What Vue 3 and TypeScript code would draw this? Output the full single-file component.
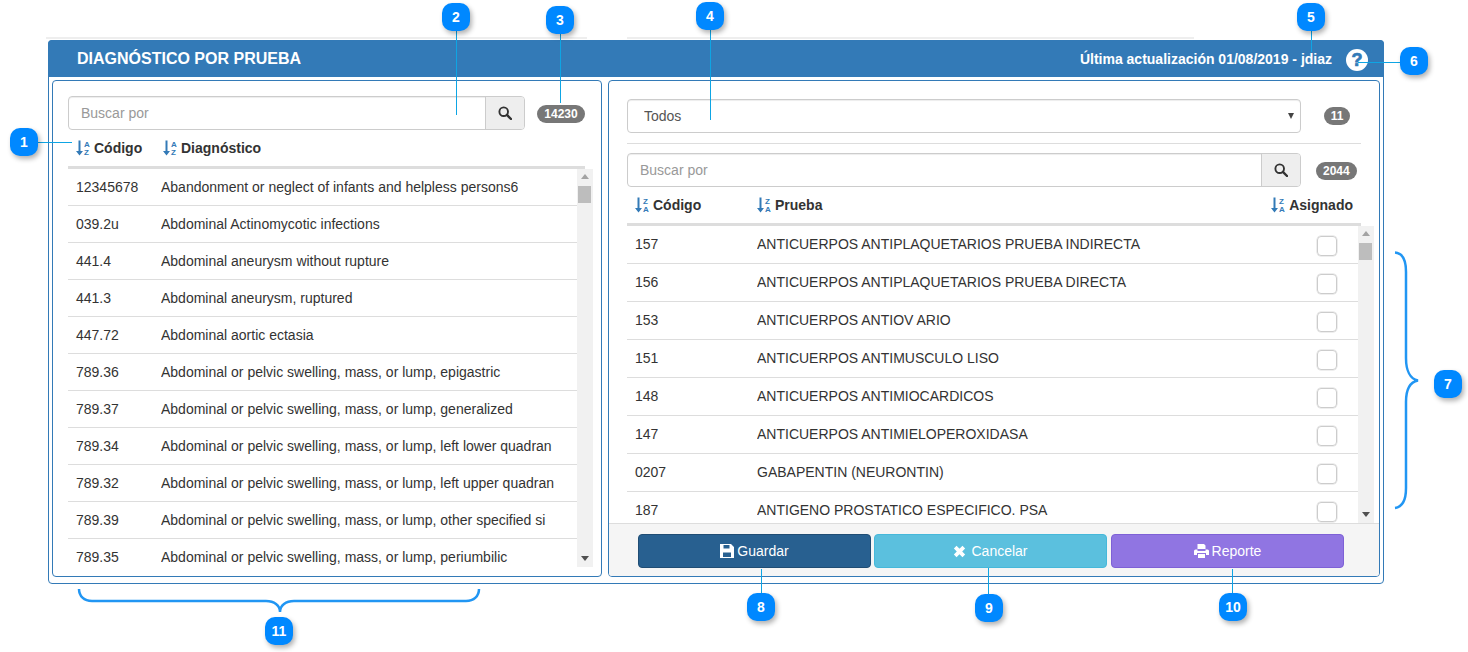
<script setup lang="ts">
interface Diag { code: string; name: string }
interface Test { code: string; name: string }
interface Marker { n: number; x: number; y: number }

const diagnosticos: Diag[] = [
  { code: '12345678', name: 'Abandonment or neglect of infants and helpless persons6' },
  { code: '039.2u', name: 'Abdominal Actinomycotic infections' },
  { code: '441.4', name: 'Abdominal aneurysm without rupture' },
  { code: '441.3', name: 'Abdominal aneurysm, ruptured' },
  { code: '447.72', name: 'Abdominal aortic ectasia' },
  { code: '789.36', name: 'Abdominal or pelvic swelling, mass, or lump, epigastric' },
  { code: '789.37', name: 'Abdominal or pelvic swelling, mass, or lump, generalized' },
  { code: '789.34', name: 'Abdominal or pelvic swelling, mass, or lump, left lower quadran' },
  { code: '789.32', name: 'Abdominal or pelvic swelling, mass, or lump, left upper quadran' },
  { code: '789.39', name: 'Abdominal or pelvic swelling, mass, or lump, other specified si' },
  { code: '789.35', name: 'Abdominal or pelvic swelling, mass, or lump, periumbilic' },
]

const pruebas: Test[] = [
  { code: '157', name: 'ANTICUERPOS ANTIPLAQUETARIOS PRUEBA INDIRECTA' },
  { code: '156', name: 'ANTICUERPOS ANTIPLAQUETARIOS PRUEBA DIRECTA' },
  { code: '153', name: 'ANTICUERPOS ANTIOV ARIO' },
  { code: '151', name: 'ANTICUERPOS ANTIMUSCULO LISO' },
  { code: '148', name: 'ANTICUERPOS ANTIMIOCARDICOS' },
  { code: '147', name: 'ANTICUERPOS ANTIMIELOPEROXIDASA' },
  { code: '0207', name: 'GABAPENTIN (NEURONTIN)' },
  { code: '187', name: 'ANTIGENO PROSTATICO ESPECIFICO. PSA' },
]

// numbered callouts drawn over the screen
const markers: Marker[] = [
  { n: 1, x: 10, y: 128 },
  { n: 2, x: 442, y: 3 },
  { n: 3, x: 546, y: 6 },
  { n: 4, x: 696, y: 2 },
  { n: 5, x: 1297, y: 3 },
  { n: 6, x: 1400, y: 47 },
  { n: 7, x: 1434, y: 370 },
  { n: 8, x: 747, y: 593 },
  { n: 9, x: 975, y: 594 },
  { n: 10, x: 1219, y: 593 },
  { n: 11, x: 265, y: 617 },
]
</script>

<template>
  <div class="page">
    <div class="strips"><span class="strip strip--a"></span><span class="strip strip--b"></span></div>

    <section class="panel">
      <header class="panel__head">
        <h1 class="panel__title">DIAGNÓSTICO POR PRUEBA</h1>
        <span class="panel__updated">Última actualización 01/08/2019 - jdiaz</span>
        <span class="help">?</span>
      </header>

      <div class="panel__body">
        <!-- Diagnosticos -->
        <div class="box box--left">
          <div class="search-row search-row--left">
            <div class="search">
              <input class="search__input" type="text" placeholder="Buscar por" />
              <span class="search__btn">
                <svg width="14" height="14" viewBox="0 0 14 14"><circle cx="5.7" cy="5.7" r="4.3" fill="none" stroke="#333" stroke-width="1.9" /><path d="M8.9 8.9 13 13" stroke="#333" stroke-width="2.4" stroke-linecap="round" /></svg>
              </span>
            </div>
            <span class="count count--total">14230</span>
          </div>

          <div class="cols cols--left">
            <span class="col col--code">
              <svg class="sort" width="14" height="16" viewBox="0 0 14 16"><path d="M2.500 0.500h2V11H7l-3.500 4.500L0 11h2.500z" fill="#337ab7" /><text x="8" y="7" class="sort__t">A</text><text x="8" y="15" class="sort__t">Z</text></svg>
              Código
            </span>
            <span class="col">
              <svg class="sort" width="14" height="16" viewBox="0 0 14 16"><path d="M2.500 0.500h2V11H7l-3.500 4.500L0 11h2.500z" fill="#337ab7" /><text x="8" y="7" class="sort__t">A</text><text x="8" y="15" class="sort__t">Z</text></svg>
              Diagnóstico
            </span>
          </div>

          <div class="list list--left">
            <div class="rows">
              <div v-for="d in diagnosticos" :key="d.code" class="row row--left">
                <span class="row__code">{{ d.code }}</span>
                <span class="row__name">{{ d.name }}</span>
              </div>
            </div>
            <div class="scroll">
              <i class="scroll__up"></i>
              <i class="scroll__thumb"></i>
              <i class="scroll__down"></i>
            </div>
          </div>
        </div>

        <!-- Pruebas -->
        <div class="box box--right">
          <div class="box__inner">
            <div class="filter-row">
              <div class="select">
                <select class="select__el">
                  <option>Todos</option>
                </select>
                <i class="select__arrow"></i>
              </div>
              <span class="count count--eleven">11</span>
            </div>
            <hr class="sep" />
            <div class="search-row search-row--right">
              <div class="search">
                <input class="search__input" type="text" placeholder="Buscar por" />
                <span class="search__btn">
                  <svg width="14" height="14" viewBox="0 0 14 14"><circle cx="5.7" cy="5.7" r="4.3" fill="none" stroke="#333" stroke-width="1.9" /><path d="M8.9 8.9 13 13" stroke="#333" stroke-width="2.4" stroke-linecap="round" /></svg>
                </span>
              </div>
              <span class="count">2044</span>
            </div>

            <div class="cols cols--right">
              <span class="col col--code-r">
                <svg class="sort" width="14" height="16" viewBox="0 0 14 16"><path d="M2.500 0.500h2V11H7l-3.500 4.500L0 11h2.500z" fill="#337ab7" /><text x="8" y="7" class="sort__t">Z</text><text x="8" y="15" class="sort__t">A</text></svg>
                Código
              </span>
              <span class="col col--grow">
                <svg class="sort" width="14" height="16" viewBox="0 0 14 16"><path d="M2.500 0.500h2V11H7l-3.500 4.500L0 11h2.500z" fill="#337ab7" /><text x="8" y="7" class="sort__t">Z</text><text x="8" y="15" class="sort__t">A</text></svg>
                Prueba
              </span>
              <span class="col">
                <svg class="sort" width="14" height="16" viewBox="0 0 14 16"><path d="M2.500 0.500h2V11H7l-3.500 4.500L0 11h2.500z" fill="#337ab7" /><text x="8" y="7" class="sort__t">Z</text><text x="8" y="15" class="sort__t">A</text></svg>
                Asignado
              </span>
            </div>

            <div class="list list--right">
              <div class="rows">
                <div v-for="p in pruebas" :key="p.code" class="row row--right">
                  <span class="row__code row__code--r">{{ p.code }}</span>
                  <span class="row__name row__name--r">{{ p.name }}</span>
                  <span class="check"></span>
                </div>
              </div>
              <div class="scroll">
                <i class="scroll__up"></i>
                <i class="scroll__thumb"></i>
                <i class="scroll__down"></i>
              </div>
            </div>
          </div>

          <footer class="actions">
            <button class="btn btn--save">
              <svg width="14" height="14" viewBox="0 0 14 14"><path fill="#fff" fill-rule="evenodd" d="M0 0h11l3 3v11H0zM3.500 1v3.500h6V1zM3 8.500V13h8V8.500z" /></svg>
              Guardar
            </button>
            <button class="btn btn--cancel">
              <svg width="13" height="13" viewBox="0 0 13 13"><path d="M2.200 2.200l8.600 8.600M10.800 2.200l-8.600 8.600" stroke="#fff" stroke-width="3.800" /></svg>
              Cancelar
            </button>
            <button class="btn btn--report">
              <svg width="15" height="14" viewBox="0 0 15 14"><path fill="#fff" d="M3.500 0h6.500l1.500 1.500V5h-8zM1.500 5.500H3.500v1.500h8V5.500h2A1.500 1.500 0 0 1 15 7v4h-3V9H3v2H0V7a1.500 1.500 0 0 1 1.500-1.500zM4 10h7v4H4z" /></svg>
              Reporte
            </button>
          </footer>
        </div>
      </div>
    </section>

    <!-- callouts -->
    <svg class="lines" width="1468" height="652" viewBox="0 0 1468 652">
      <g stroke="#0ea5e4" stroke-width="1" fill="none">
        <path d="M38 142.500H72" />
        <path d="M456.500 31V115" />
        <path d="M560.500 34V103" />
        <path d="M710.500 30V120" />
        <path d="M1311.500 31V52" />
        <path d="M1358 62.500H1400" />
        <path d="M761.500 569V593" />
        <path d="M988.500 568V594" />
        <path d="M1232.500 569V593" />
      </g>
      <g stroke="#2196f3" stroke-width="2.500" fill="none">
        <path d="M79 589C79 596 84 601 92 601H266C274 601 280 605 280 612C280 605 286 601 294 601H466C474 601 479 596 479 589" />
        <path d="M1395 252.500C1402 253 1406 260 1406 272V358C1406 370 1410 379 1418 380.500C1410 382 1406 390 1406 402V488C1406 500 1402 507 1395 508" />
      </g>
    </svg>
    <span
      v-for="m in markers"
      :key="m.n"
      class="marker"
      :style="{ left: m.x + 'px', top: m.y + 'px' }"
    >{{ m.n }}</span>
  </div>
</template>

<style scoped>
.page {
  position: relative;
  width: 1468px;
  height: 652px;
  overflow: hidden;
  padding: 37px 0 0 48px;
  box-sizing: border-box;
  font-family: "Liberation Sans", Arial, sans-serif;
  font-size: 14px;
  color: #333;
  background: #fff;
}

.strips {
  display: flex;
  height: 2px;
  margin: 0 0 1px -2px;
}
.strip {
  display: block;
  height: 2px;
  background: #eee;
}
.strip--a { width: 541px; }
.strip--b { width: 567px; margin-left: 40px; }

/* Panel */
.panel {
  width: 1336px;
  height: 544px;
  box-sizing: border-box;
  border: 1px solid #337ab7;
  border-radius: 4px;
  display: flex;
  flex-direction: column;
}
.panel__head {
  height: 37px;
  margin: -1px -1px 0;
  flex: none;
  background: #337ab7;
  border-radius: 4px 4px 0 0;
  color: #fff;
  display: flex;
  align-items: center;
  padding: 0 16px 0 29px;
  font-weight: 700;
}
.panel__title {
  margin: 0;
  font-size: 16px;
  font-weight: 700;
  flex: 1;
}
.panel__updated { font-size: 14px; }
.help {
  width: 22px;
  height: 22px;
  margin-left: 14px;
  margin-top: 3px;
  border-radius: 50%;
  background: #fff;
  color: #337ab7;
  font-size: 18px;
  font-weight: 700;
  line-height: 22px;
  text-align: center;
  -webkit-text-stroke: .7px #337ab7;
}
.panel__body {
  flex: 1;
  display: flex;
  gap: 6px;
  padding: 3px 3px 6px;
  min-height: 0;
}

/* Inner boxes */
.box {
  box-sizing: border-box;
  border: 1px solid #337ab7;
  border-radius: 4px;
  display: flex;
  flex-direction: column;
  overflow: hidden;
}
.box--left {
  width: 550px;
  padding: 15px 16px 0 15px;
}
.box--right {
  width: 772px;
}
.box__inner {
  flex: 1;
  min-height: 0;
  padding: 18px 18px 0;
  display: flex;
  flex-direction: column;
}

/* Search */
.search-row {
  display: flex;
  align-items: center;
  flex: none;
}
.search-row--left { gap: 12px; }
.search-row--left .search { width: 457px; }
.search-row--left .count { margin-top: 2px; }
.search-row--right .search { width: 674px; }
.search-row--right .count { margin: 2px 0 0 15px; }
.search {
  display: flex;
  height: 34px;
  box-sizing: border-box;
  border: 1px solid #ccc;
  border-radius: 4px;
  box-shadow: inset 0 1px 1px rgba(0, 0, 0, .075);
  overflow: hidden;
}
.search__input {
  flex: 1;
  min-width: 0;
  border: 0;
  outline: 0;
  background: transparent;
  padding: 0 12px;
  font: 14px "Liberation Sans", Arial, sans-serif;
  color: #555;
}
.search__input::placeholder { color: #999; opacity: 1; }
.search__btn {
  width: 38px;
  flex: none;
  background: #eee;
  border-left: 1px solid #ccc;
  display: flex;
  align-items: center;
  justify-content: center;
}
.count {
  flex: none;
  box-sizing: border-box;
  height: 18px;
  padding: 0 7px;
  border-radius: 10px;
  background: #777;
  color: #fff;
  font-size: 12px;
  font-weight: 700;
  line-height: 18px;
  text-align: center;
}
.count--total { width: 48px; padding: 0; }
.count--eleven { margin: 0 0 0 23px; width: 26px; padding: 0; }

/* Filter */
.filter-row {
  display: flex;
  align-items: center;
  flex: none;
  height: 34px;
}
.select {
  position: relative;
  width: 674px;
  height: 34px;
}
.select__el {
  appearance: none;
  width: 100%;
  height: 100%;
  box-sizing: border-box;
  border: 1px solid #ccc;
  border-radius: 4px;
  background: #fff;
  padding: 0 16px;
  font: 14px "Liberation Sans", Arial, sans-serif;
  color: #555;
  box-shadow: inset 0 1px 1px rgba(0, 0, 0, .075);
}
.select__arrow {
  position: absolute;
  right: 7px;
  top: 14px;
  border: 3px solid transparent;
  border-top: 6px solid #444;
  border-bottom: 0;
}
.sep {
  flex: none;
  width: 734px;
  margin: 10px 0 9px;
  border: 0;
  border-top: 1px solid #ddd;
}

/* Column headers */
.cols {
  flex: none;
  display: flex;
  align-items: center;
  font-weight: 700;
  box-sizing: border-box;
  border-bottom: 3px solid #ddd;
  padding-left: 8px;
}
.cols--left { height: 39px; }
.cols--right {
  height: 39px;
  width: 734px;
  padding-right: 8px;
}
.col {
  display: flex;
  align-items: center;
  gap: 4px;
}
.col--code { width: 87px; }
.col--code-r { width: 122px; }
.col--grow { flex: 1; }
.sort { flex: none; }
.sort__t {
  font-size: 8px;
  font-weight: 700;
  fill: #337ab7;
}

/* Lists */
.list {
  display: flex;
  flex: none;
  overflow: hidden;
}
.list--left {
  height: 398px;
  width: 525px;
}
.list--right {
  flex: 1;
  min-height: 0;
  width: 747px;
}
.rows {
  flex: 1;
  min-width: 0;
  overflow: hidden;
}
.row {
  display: flex;
  box-sizing: border-box;
  align-items: center;
  padding-left: 8px;
  border-bottom: 1px solid #ddd;
  white-space: nowrap;
}
.row--left { height: 37px; }
.row--right {
  height: 38px;
  padding-bottom: 2px;
}
.row__code { width: 85px; flex: none; }
.row__code--r { width: 122px; }
.row__name { flex: 1; overflow: hidden; }
.check {
  width: 20px;
  height: 20px;
  box-sizing: border-box;
  margin: 4px 21px 0 0;
  border: 1px solid #ccc;
  border-radius: 4px;
  box-shadow: 0 0 0 .5px #ddd;
  flex: none;
}
.scroll {
  width: 16px;
  flex: none;
  background: #f1f1f1;
  position: relative;
}
.scroll__up,
.scroll__down {
  position: absolute;
  left: 4px;
  border: 4px solid transparent;
}
.scroll__up {
  top: 5px;
  border-top: 0;
  border-bottom: 5px solid #a3a3a3;
}
.scroll__down {
  bottom: 6px;
  border-bottom: 0;
  border-top: 5px solid #505050;
}
.scroll__thumb {
  position: absolute;
  top: 17px;
  left: 1px;
  width: 13px;
  height: 17px;
  background: #bdbdbd;
}

/* Footer */
.actions {
  flex: none;
  height: 53px;
  box-sizing: border-box;
  display: flex;
  gap: 3px;
  padding: 10px 0 0 29px;
  background: #f5f5f5;
  border-top: 1px solid #ddd;
}
.btn {
  width: 233px;
  height: 34px;
  box-sizing: border-box;
  border: 1px solid;
  border-radius: 4px;
  color: #fff;
  font: 14px "Liberation Sans", Arial, sans-serif;
  display: flex;
  align-items: center;
  justify-content: center;
  gap: 3px;
  padding: 0;
}
.btn--save { background: #286090; border-color: #204d74; }
.btn--cancel { background: #5bc0de; border-color: #46b8da; gap: 5px; }
.btn--report { background: #9075e2; border-color: #7e61d6; margin-left: 1px; }

/* Callouts */
.lines {
  position: absolute;
  left: 0;
  top: 0;
  pointer-events: none;
}
.marker {
  position: absolute;
  width: 28px;
  height: 28px;
  border-radius: 10px;
  background: #0088ff;
  color: #fff;
  font-size: 14px;
  font-weight: 700;
  line-height: 28px;
  text-align: center;
  box-shadow: 2px 3px 5px rgba(0, 0, 0, .3);
}
</style>
